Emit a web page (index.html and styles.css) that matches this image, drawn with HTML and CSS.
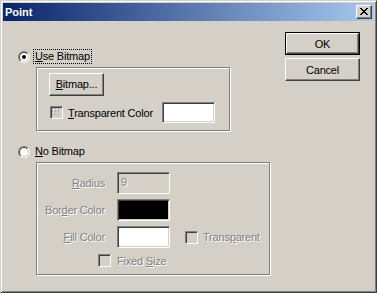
FILE: index.html
```html
<!DOCTYPE html>
<html>
<head>
<meta charset="utf-8">
<link rel="stylesheet" href="styles.css">
</head>
<body>
<div class="window">
  <div class="titlebar">
    <span class="title">Point</span>
    <span class="close"><svg width="8" height="7" viewBox="0 0 8 7" shape-rendering="crispEdges"><path fill="#000" d="M0 0h2v1H0zM6 0h2v1H6zM1 1h2v1H1zM5 1h2v1H5zM2 2h4v1H2zM3 3h2v1H3zM2 4h4v1H2zM1 5h2v1H1zM5 5h2v1H5zM0 6h2v1H0zM6 6h2v1H6z"/></svg></span>
  </div>
  <div class="content">
    <div class="main">
      <div class="radio-row">
        <span class="radio checked"></span>
        <span class="focus"><u>U</u>se Bitmap</span>
      </div>
      <div class="group g1">
        <span class="btn bitmap"><u>B</u>itmap...</span>
        <div class="check-row">
          <span class="check dither"></span>
          <span class="lbl"><u>T</u>ransparent Color</span>
          <span class="field white"></span>
        </div>
      </div>
      <div class="radio-row r2">
        <span class="radio"></span>
        <span class="nofocus"><u>N</u>o Bitmap</span>
      </div>
      <div class="group g2">
        <div class="form">
          <span class="dis flabel"><u>R</u>adius</span>
          <span class="field gray"><span class="dis val">9</span></span>
          <span></span>
          <span class="dis flabel">Bor<u>d</u>er Color</span>
          <span class="field black"></span>
          <span></span>
          <span class="dis flabel"><u>F</u>ill Color</span>
          <span class="field white"></span>
          <span class="inline-check"><span class="check"></span><span class="dis">Trans<u>p</u>arent</span></span>
        </div>
        <div class="fixed-row">
          <span class="check"></span>
          <span class="dis">Fixed <u>S</u>ize</span>
        </div>
      </div>
    </div>
    <div class="side">
      <span class="btn default"><span class="inner">OK</span></span>
      <span class="btn cancel">Cancel</span>
    </div>
  </div>
</div>
</body>
</html>
```

FILE: styles.css
```css
html, body {
  margin: 0;
  padding: 0;
  background: #d4d0c8;
}
body {
  font-family: "Liberation Sans", Arial, sans-serif;
  font-size: 11px;
  letter-spacing: -0.2px;
  color: #000;
}
.window {
  width: 377px;
  height: 293px;
  box-sizing: border-box;
  background: #d4d0c8;
  border: 1px solid;
  border-color: #d4d0c8 #404040 #404040 #d4d0c8;
  box-shadow: inset 1px 1px 0 #fff, inset -1px -1px 0 #808080;
  padding: 2px;
  overflow: hidden;
}
.titlebar {
  height: 18px;
  background: linear-gradient(to right, #0a246a, #a6caf0);
  display: flex;
  align-items: center;
  justify-content: space-between;
  padding: 0 2px 0 2px;
}
.title {
  color: #fff;
  font-weight: bold;
  font-size: 11px;
  letter-spacing: 0;
  line-height: 18px;
}
.close {
  width: 16px;
  height: 14px;
  box-sizing: border-box;
  background: #d4d0c8;
  border: 1px solid;
  border-color: #fff #404040 #404040 #fff;
  box-shadow: inset -1px -1px 0 #808080;
  display: flex;
  align-items: center;
  justify-content: center;
  padding: 0 1px 1px 0;
}
.close svg { display: block; }
.content {
  display: flex;
}
.main {
  width: 267px;
  padding-left: 15px;
  padding-top: 28px;
}
.radio-row {
  display: flex;
  align-items: center;
  height: 15px;
}
.radio {
  width: 12px;
  height: 12px;
  box-sizing: border-box;
  border-radius: 50%;
  border: 1px solid;
  border-color: #808080 #fff #fff #808080;
  position: relative;
  margin-right: 3px;
  flex: none;
}
.radio::before {
  content: "";
  position: absolute;
  inset: 0;
  border-radius: 50%;
  border: 1px solid;
  border-color: #404040 #d4d0c8 #d4d0c8 #404040;
  background: #fff;
}
.radio.checked::after {
  content: "";
  position: absolute;
  left: 3px;
  top: 3px;
  width: 4px;
  height: 4px;
  border-radius: 50%;
  background: #000;
}
.focus {
  border: 1px dotted #000;
  padding: 0 1px;
  line-height: 13px;
}
.nofocus {
  border: 1px solid transparent;
  padding: 0 1px;
  line-height: 13px;
}
.group {
  margin-left: 18px;
  margin-top: 3px;
  box-sizing: border-box;
  border: 1px solid #808080;
  box-shadow: inset 1px 1px 0 #fff, 1px 1px 0 #fff;
}
.g1 {
  width: 194px;
  height: 64px;
  padding: 5px 0 0 12px;
}
.btn {
  display: flex;
  align-items: center;
  justify-content: center;
  box-sizing: border-box;
  background: #d4d0c8;
  border: 1px solid;
  border-color: #fff #404040 #404040 #fff;
  box-shadow: inset -1px -1px 0 #808080;
}
.bitmap {
  width: 55px;
  height: 23px;
  padding-bottom: 1px;
}
.check-row {
  display: flex;
  align-items: center;
  height: 21px;
  margin-top: 6px;
}
.check {
  width: 13px;
  height: 13px;
  box-sizing: border-box;
  border: 1px solid;
  border-color: #808080 #fff #fff #808080;
  box-shadow: inset 1px 1px 0 #404040, inset -1px -1px 0 #d4d0c8;
  background: #d4d0c8;
  flex: none;
}
.check-row .check {
  margin-left: 1px;
  margin-right: 4px;
}
.dither {
  background-color: #d4d0c8;
  background-image: radial-gradient(circle, #a0a0a0 0.6px, transparent 0.8px);
  background-size: 3px 3px;
}
.lbl {
  width: 94px;
  padding-left: 1px;
}
.field {
  width: 53px;
  height: 21px;
  box-sizing: border-box;
  border: 1px solid;
  border-color: #808080 #fff #fff #808080;
  box-shadow: inset 1px 1px 0 #404040, inset -1px -1px 0 #d4d0c8;
  flex: none;
}
.field.white { background: #fff; }
.field.black { background: #000; }
.field.gray {
  background: #d4d0c8;
  display: flex;
  align-items: center;
  padding-left: 3px;
}
.r2 {
  margin-top: 13px;
}
.g2 {
  width: 234px;
  height: 113px;
  padding-top: 9px;
}
.dis {
  color: #808080;
  text-shadow: 1px 1px 0 #fff;
}
.form {
  display: grid;
  grid-template-columns: 68px 53px auto;
  column-gap: 12px;
  row-gap: 5px;
  align-items: center;
}
.form .field {
  height: 22px;
}
.flabel {
  text-align: right;
}
.val {
  line-height: 14px;
  padding-bottom: 3px;
}
.inline-check {
  display: flex;
  align-items: center;
  margin-left: 3px;
}
.inline-check .check {
  margin-right: 5px;
}
.fixed-row {
  display: flex;
  align-items: center;
  height: 13px;
  margin-top: 6px;
  padding-left: 61px;
}
.fixed-row .check {
  margin-right: 6px;
}
.side {
  display: flex;
  flex-direction: column;
  padding-top: 11px;
  gap: 3px;
}
.side .btn {
  width: 75px;
  height: 23px;
}
.default {
  border: 1px solid #000;
  box-shadow: none;
  padding: 0;
}
.default .inner {
  width: 100%;
  height: 100%;
  box-sizing: border-box;
  border: 1px solid;
  border-color: #fff #404040 #404040 #fff;
  box-shadow: inset -1px -1px 0 #808080;
  display: flex;
  align-items: center;
  justify-content: center;
}
```
